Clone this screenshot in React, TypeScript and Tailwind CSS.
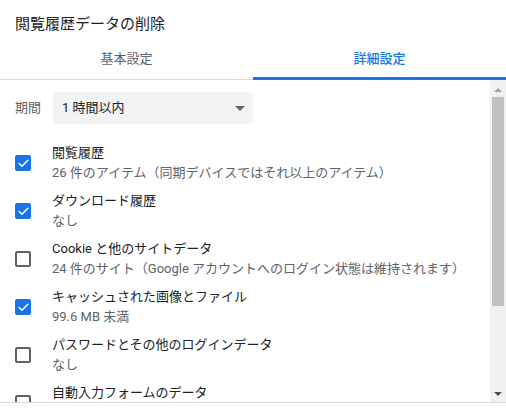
import { Check } from 'lucide-react';

type Item = { label: string; sub: string; checked: boolean };

const items: Item[] = [
  { label: '閲覧履歴', sub: '26 件のアイテム（同期デバイスではそれ以上のアイテム）', checked: true },
  { label: 'ダウンロード履歴', sub: 'なし', checked: true },
  { label: 'Cookie と他のサイトデータ', sub: '24 件のサイト（Google アカウントへのログイン状態は維持されます）', checked: false },
  { label: 'キャッシュされた画像とファイル', sub: '99.6 MB 未満', checked: true },
  { label: 'パスワードとその他のログインデータ', sub: 'なし', checked: false },
  { label: '自動入力フォームのデータ', sub: '', checked: false },
];

function Checkbox({ checked }: { checked: boolean }) {
  if (checked) {
    return (
      <div className="flex h-[16px] w-[16px] shrink-0 items-center justify-center rounded-[2px] bg-[#1a73e8]">
        <Check size={13} strokeWidth={3} className="text-white" />
      </div>
    );
  }
  return <div className="h-[16px] w-[16px] shrink-0 rounded-[2px] border-2 border-[#5f6368]" />;
}

function Scrollbar() {
  return (
    <div className="flex w-[16px] shrink-0 flex-col bg-[#f1f1f1]">
      <div className="flex h-[17px] items-center justify-center pt-[2px]">
        <div className="h-0 w-0 border-x-[4px] border-b-[4px] border-x-transparent border-b-[#a3a3a3]" />
      </div>
      <div className="mx-[2px] h-[209px] bg-[#c1c1c1]" />
      <div className="flex-1" />
      <div className="flex h-[16px] items-center justify-center pb-[1px]">
        <div className="h-0 w-0 border-x-[4px] border-t-[4px] border-x-transparent border-t-[#505050]" />
      </div>
    </div>
  );
}

export default function App() {
  return (
    <div
      className="h-[416px] w-[506px] overflow-hidden bg-white"
      style={{ fontFamily: 'Roboto, "Noto Sans CJK JP", sans-serif' }}
    >
      <div className="flex h-[45px] items-center pl-[15px] pt-[3px] text-[15px] text-[#202124]">
        閲覧履歴データの削除
      </div>

      <div className="flex h-[35px]">
        <div className="flex flex-1 justify-center border-b border-[#dadce0] pt-[4px] text-[13px] leading-[20px] text-[#5f6368]">
          基本設定
        </div>
        <div className="flex flex-1 justify-center border-b-[3px] border-[#1a73e8] pt-[4px] text-[13px] font-medium leading-[20px] text-[#1a73e8]">
          詳細設定
        </div>
      </div>

      <div className="flex h-[323px] border-b border-[#dadce0]">
        <div className="flex-1 overflow-hidden">
          <div className="flex items-center pl-[15px] pt-[12px]">
            <span className="w-[38px] text-[13px] text-[#5f6368]">期間</span>
            <div className="flex h-[32px] w-[200px] items-center justify-between rounded-[4px] bg-[#f1f3f4] pl-[9px] pr-[8px] text-[13px] text-[#202124]">
              <span>1 時間以内</span>
              <div className="h-0 w-0 border-x-[5px] border-t-[5px] border-x-transparent border-t-[#5f6368]" />
            </div>
          </div>

          <div className="flex flex-col pt-[15px]">
            {items.map((item) => (
              <div key={item.label} className="flex h-[48px] shrink-0 items-center pl-[15px]">
                <Checkbox checked={item.checked} />
                <div className="flex flex-col pl-[21px] text-[13px] leading-[20px]">
                  <span className="text-[#202124]">{item.label}</span>
                  <span className="h-[20px] text-[#5f6368]">{item.sub}</span>
                </div>
              </div>
            ))}
          </div>
        </div>
        <Scrollbar />
      </div>
    </div>
  );
}
